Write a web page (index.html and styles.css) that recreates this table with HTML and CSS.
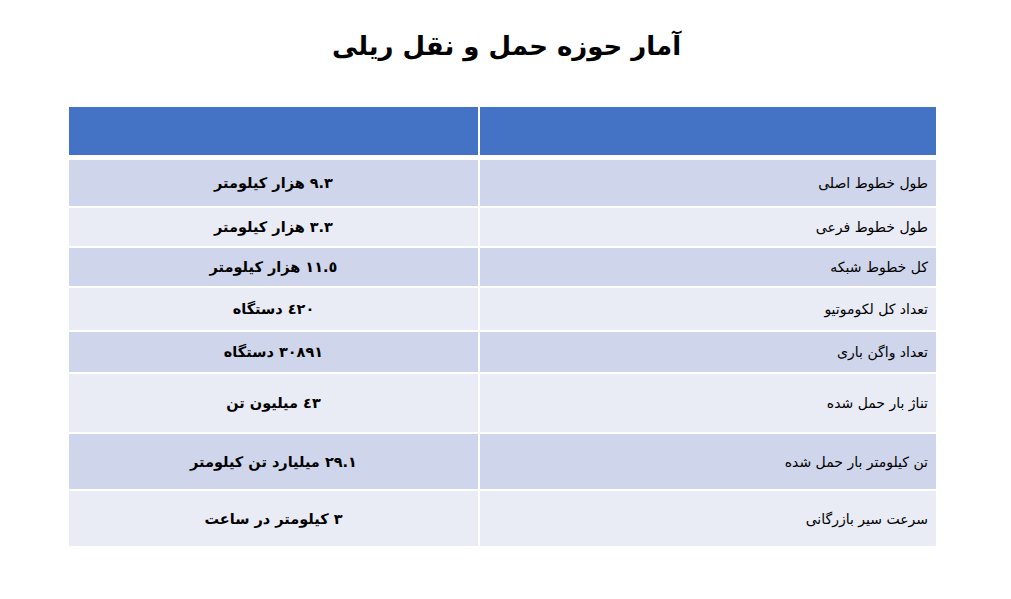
FILE: index.html
```html
<!DOCTYPE html>
<html lang="fa">
<head>
<meta charset="utf-8">
<title>آمار حوزه حمل و نقل ریلی</title>
<link rel="stylesheet" href="styles.css">
</head>
<body>
<div class="page">
  <h1 class="title" dir="rtl">آمار حوزه حمل و نقل ریلی</h1>
  <table class="stats" dir="rtl">
    <thead>
      <tr><th class="label h-head"></th><th class="value h-head"></th></tr>
    </thead>
    <tbody>
      <tr class="odd"><td class="label h46">طول خطوط اصلی</td><td class="value h46">٩.٣ هزار کیلومتر</td></tr>
      <tr class="even"><td class="label h38">طول خطوط فرعی</td><td class="value h38">٣.٣ هزار کیلومتر</td></tr>
      <tr class="odd"><td class="label h38">کل خطوط شبکه</td><td class="value h38">١١.٥ هزار کیلومتر</td></tr>
      <tr class="even"><td class="label h42">تعداد کل لکوموتیو</td><td class="value h42">٤٢٠ دستگاه</td></tr>
      <tr class="odd"><td class="label h40">تعداد واگن باری</td><td class="value h40">٣٠٨٩١ دستگاه</td></tr>
      <tr class="even"><td class="label h58">تناژ بار حمل شده</td><td class="value h58">٤٣ میلیون تن</td></tr>
      <tr class="odd"><td class="label h55">تن کیلومتر بار حمل شده</td><td class="value h55">٢٩.١ میلیارد تن کیلومتر</td></tr>
      <tr class="even"><td class="label h55">سرعت سیر بازرگانی</td><td class="value h55">٣ کیلومتر در ساعت</td></tr>
    </tbody>
  </table>
</div>
</body>
</html>
```
FILE: styles.css
```css
html, body {
  margin: 0;
  padding: 0;
  background: #ffffff;
}
.page {
  width: 1011px;
  padding-top: 24px;
  font-family: "DejaVu Sans", sans-serif;
  color: #000;
}
.title {
  margin: 0;
  text-align: center;
  font-size: 26px;
  line-height: 44px;
  font-weight: bold;
  padding-left: 2px;
}
.stats {
  margin: 39px 0 0 69px;
  width: 867px;
  border-collapse: separate;
  border-spacing: 0;
  table-layout: fixed;
}
.stats th, .stats td {
  padding: 0;
  border-bottom: 2px solid #fff;
  vertical-align: middle;
}
.stats th {
  background: #4472c4;
  border-bottom-width: 5px;
}
.stats .label {
  width: 448px;
  border-left: 2px solid #fff;
  text-align: right;
  padding-right: 8px;
  font-size: 14px;
  font-weight: normal;
}
.stats .value {
  text-align: center;
  font-size: 14.5px;
  font-weight: bold;
}
.stats tr.odd td { background: #cfd5ea; }
.stats tr.even td { background: #e9ebf5; }
.h-head { height: 48px; }
.h46 { height: 46px; }
.h38 { height: 38px; }
.h42 { height: 42px; }
.h40 { height: 40px; }
.h58 { height: 58px; }
.h55 { height: 55px; }
```
